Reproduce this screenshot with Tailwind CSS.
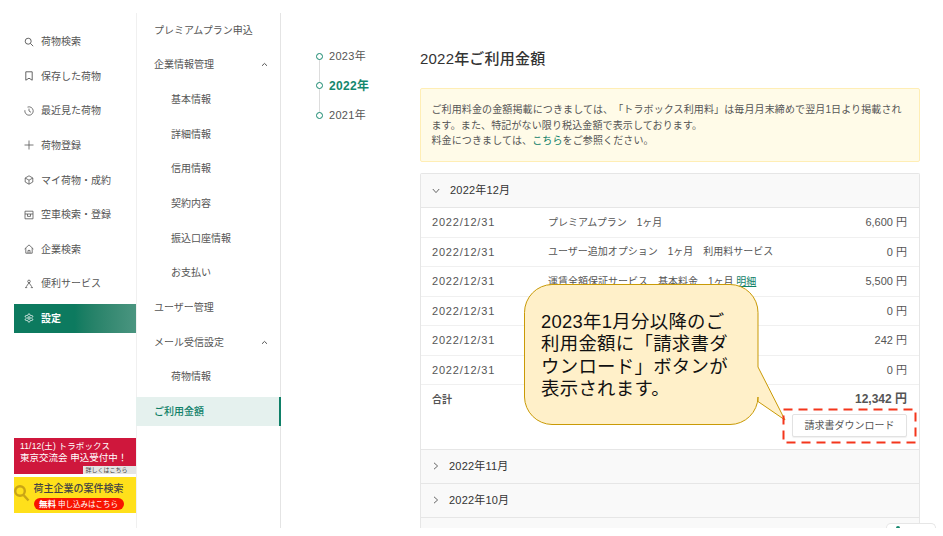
<!DOCTYPE html>
<html lang="ja">
<head>
<meta charset="utf-8">
<script src="https://cdn.jsdelivr.net/npm/@tailwindcss/browser@4"></script>
</head>
<body class="bg-white">
<div class="relative w-[943px] h-[536px] overflow-hidden bg-white text-[#555] text-[10px] [text-spacing-trim:space-all] font-['Liberation_Sans','Noto_Sans_CJK_JP',sans-serif]">
  <div class="flex h-[528px] overflow-hidden">
    <!-- Main nav -->
    <nav class="w-[136px] shrink-0 pl-[14px] pt-[27.3px] flex flex-col">
      <div class="flex flex-col gap-[5.8px]">
        <a class="h-[28.8px] flex items-center pl-[10px] gap-[7px]"><svg class="w-[10px] h-[10px]" viewBox="0 0 10 10" fill="none" stroke="#555" stroke-width="0.9"><circle cx="4.2" cy="4.2" r="3"/><path d="M6.4 6.4 9.2 9.2"/></svg><span>荷物検索</span></a>
        <a class="h-[28.8px] flex items-center pl-[10px] gap-[7px]"><svg class="w-[10px] h-[10px]" viewBox="0 0 10 10" fill="none" stroke="#555" stroke-width="0.9"><path d="M1.8.8h6.4v8.4L5 7.2 1.8 9.2z"/></svg><span>保存した荷物</span></a>
        <a class="h-[28.8px] flex items-center pl-[10px] gap-[7px]"><svg class="w-[10px] h-[10px]" viewBox="0 0 10 10" fill="none" stroke="#555" stroke-width="0.8"><path d="M3.5 1.1A4.2 4.2 0 1 1 .9 4.2M5 2.6V5l2 1.3"/></svg><span>最近見た荷物</span></a>
        <a class="h-[28.8px] flex items-center pl-[10px] gap-[7px]"><svg class="w-[10px] h-[10px]" viewBox="0 0 10 10" fill="none" stroke="#555" stroke-width="0.8"><path d="M5 .5v9M.5 5h9"/></svg><span>荷物登録</span></a>
        <a class="h-[28.8px] flex items-center pl-[10px] gap-[7px]"><svg class="w-[10px] h-[10px]" viewBox="0 0 10 10" fill="none" stroke="#555" stroke-width="0.8"><path d="M5 .8 8.8 3v4L5 9.2 1.2 7V3zM1.2 3 5 5.2 8.8 3M5 5.2v4"/></svg><span>マイ荷物・成約</span></a>
        <a class="h-[28.8px] flex items-center pl-[10px] gap-[7px]"><svg class="w-[10px] h-[10px]" viewBox="0 0 10 10" fill="none" stroke="#555" stroke-width="0.8"><path d="M1 1.2h8v7.6H1zM1 4h8M3.500 4v2.400h3V4"/></svg><span>空車検索・登録</span></a>
        <a class="h-[28.8px] flex items-center pl-[10px] gap-[7px]"><svg class="w-[10px] h-[10px]" viewBox="0 0 10 10" fill="none" stroke="#555" stroke-width="0.8"><path d="M.6 5 5 .9 9.400 5M1.800 4v5.200h6.400V4M4 9.200V6.400h2v2.800"/></svg><span>企業検索</span></a>
        <a class="h-[28.8px] flex items-center pl-[10px] gap-[7px]"><svg class="w-[10px] h-[10px]" viewBox="0 0 10 10" fill="none" stroke="#555" stroke-width="0.8"><circle cx="5" cy="2.400" r="1.300"/><path d="M5 3.700 2.200 7.800M5 3.700 7.800 7.800M1 8.600h2.200M6.800 8.600H9"/></svg><span>便利サービス</span></a>
        <a class="h-[28.8px] flex items-center pl-[10px] gap-[7px] font-bold text-white bg-gradient-to-r from-[#0d7a5f] from-50% to-[#4a9580]"><svg class="w-[10px] h-[10px]" viewBox="0 0 24 24" fill="none" stroke="#fff" stroke-width="2"><path d="M12.220 2h-.44a2 2 0 0 0-2 2v.18a2 2 0 0 1-1 1.730l-.43.25a2 2 0 0 1-2 0l-.15-.08a2 2 0 0 0-2.730.73l-.22.38a2 2 0 0 0 .73 2.730l.15.1a2 2 0 0 1 1 1.720v.51a2 2 0 0 1-1 1.740l-.15.09a2 2 0 0 0-.73 2.730l.22.38a2 2 0 0 0 2.730.73l.15-.08a2 2 0 0 1 2 0l.43.25a2 2 0 0 1 1 1.730V20a2 2 0 0 0 2 2h.44a2 2 0 0 0 2-2v-.18a2 2 0 0 1 1-1.730l.43-.25a2 2 0 0 1 2 0l.15.08a2 2 0 0 0 2.730-.73l.22-.39a2 2 0 0 0-.73-2.730l-.15-.08a2 2 0 0 1-1-1.740v-.5a2 2 0 0 1 1-1.740l.15-.09a2 2 0 0 0 .73-2.730l-.22-.38a2 2 0 0 0-2.730-.73l-.15.08a2 2 0 0 1-2 0l-.43-.25a2 2 0 0 1-1-1.730V4a2 2 0 0 0-2-2z"/><circle cx="12" cy="12" r="3"/></svg><span>設定</span></a>
      </div>
      <div class="mt-auto mb-[15.5px] flex flex-col gap-[3px] w-[121.5px]">
        <div class="relative h-[36px] bg-[#cf173c] text-white pl-[6px] pt-[3px] leading-[11px] overflow-hidden">
          <div class="text-[8.5px] tracking-[0.15px] whitespace-nowrap">11/12(土) トラボックス</div>
          <div class="text-[9.5px] whitespace-nowrap">東京交流会 申込受付中！</div>
          <div class="absolute right-0 bottom-0 w-[53px] h-[8px] bg-[#e4e4e4] text-[#444] text-[6px] leading-[8px] pl-[3px]">詳しくはこちら</div>
        </div>
        <div class="relative h-[36px] bg-[#ffe01b] overflow-hidden flex flex-col items-start pl-[19.5px] pt-[5.5px]">
          <svg class="absolute left-0 top-[7px] w-[16px] h-[18px]" viewBox="0 0 16 18" fill="none" stroke="#c9a516" stroke-width="2.4"><circle cx="6" cy="7" r="4.800"/><path d="M9.500 11 14.500 16.500"/></svg>
          <div class="text-[10px] leading-[13px] font-medium text-[#444] whitespace-nowrap">荷主企業の案件検索</div>
          <div class="mt-[2.5px] w-[90px] h-[12px] rounded-full bg-[#f81400] text-white text-[7.5px] leading-[12px] text-center whitespace-nowrap"><b class="text-[8.5px]">無料</b> 申し込みはこちら</div>
        </div>
      </div>
    </nav>

    <!-- Sub nav -->
    <nav class="w-[145px] shrink-0 mt-[13px] pt-[2.6px] border-x border-x-[#f0f0f0] border-r-[#e4e4e4] flex flex-col gap-[5.8px]">
      <a class="h-[28.9px] flex items-center pl-[17px]">プレミアムプラン申込</a>
      <a class="h-[28.9px] flex items-center justify-between pl-[17px] pr-[12px]">企業情報管理<svg class="w-[7px] h-[5px]" viewBox="0 0 7 5" fill="none" stroke="#555" stroke-width="1"><path d="M1 3.800 3.500 1.400 6 3.800"/></svg></a>
      <a class="h-[28.9px] flex items-center pl-[34px]">基本情報</a>
      <a class="h-[28.9px] flex items-center pl-[34px]">詳細情報</a>
      <a class="h-[28.9px] flex items-center pl-[34px]">信用情報</a>
      <a class="h-[28.9px] flex items-center pl-[34px]">契約内容</a>
      <a class="h-[28.9px] flex items-center pl-[34px]">振込口座情報</a>
      <a class="h-[28.9px] flex items-center pl-[34px]">お支払い</a>
      <a class="h-[28.9px] flex items-center pl-[17px]">ユーザー管理</a>
      <a class="h-[28.9px] flex items-center justify-between pl-[17px] pr-[12px]">メール受信設定<svg class="w-[7px] h-[5px]" viewBox="0 0 7 5" fill="none" stroke="#555" stroke-width="1"><path d="M1 3.800 3.500 1.400 6 3.800"/></svg></a>
      <a class="h-[28.9px] flex items-center pl-[17px]"><span class="pl-[17px]">荷物情報</span></a>
      <a class="h-[28.9px] -mx-px flex items-center pl-[18px] bg-[#e5f1ee] text-[#0f8068] font-medium border-r-2 border-r-[#0f8068]">ご利用金額</a>
    </nav>

    <!-- Year timeline -->
    <div class="w-[139px] shrink-0 pl-[35px] pt-[48.5px]">
      <div class="relative flex flex-col gap-[14px] text-[11px] tracking-[0.3px]">
        <div class="absolute left-[3px] top-[8px] bottom-[8px] w-px bg-[#ddd]"></div>
        <div class="relative h-[15.5px] flex items-center gap-[6px]"><span class="w-[7px] h-[7px] rounded-full border-[1.5px] border-[#14876d] bg-white"></span>2023年</div>
        <div class="relative h-[15.5px] flex items-center gap-[6px] font-bold text-[12px] text-[#14876d]"><span class="w-[7px] h-[7px] rounded-full border-[1.5px] border-[#14876d] bg-white"></span>2022年</div>
        <div class="relative h-[15.5px] flex items-center gap-[6px]"><span class="w-[7px] h-[7px] rounded-full border-[1.5px] border-[#14876d] bg-white"></span>2021年</div>
      </div>
    </div>

    <!-- Main -->
    <main class="w-[500px] shrink-0 pt-[48px]">
      <h1 class="text-[15px] leading-[22px] tracking-[0.2px] font-medium text-[#333]">2022年ご利用金額</h1>
      <div class="mt-[18px] h-[74px] rounded-[2px] border border-[#ffeeb5] bg-[#fffbe8] pl-[10.5px] pt-[13px] leading-[15.5px] tracking-[0.12px] whitespace-nowrap">
        <p>ご利用料金の金額掲載につきましては、「トラボックス利用料」は毎月月末締めで翌月1日より掲載され</p>
        <p>ます。また、特記がない限り税込金額で表示しております。</p>
        <p>料金につきましては、<span class="text-[#0f8068]">こちら</span>をご参照ください。</p>
      </div>
      <div class="mt-[11px] rounded-t-[2px] border-x border-t border-[#e6e6e6]">
        <div class="h-[34px] bg-[#f9f9f9] border-b border-[#e6e6e6] flex items-center pl-[11px] gap-[10px] text-[11px] tracking-[0.2px] text-[#333]"><svg class="w-[8px] h-[6px]" viewBox="0 0 8 6" fill="none" stroke="#555" stroke-width="0.9"><path d="M.8 1 4 4.600 7.200 1"/></svg>2022年12月</div>
        <div class="flex h-[29.5px] items-center border-b border-[#f0f0f0] pl-[11px] pr-[12px]"><span class="w-[116px] text-[11px] tracking-[0.8px]">2022/12/31</span><span class="flex-1">プレミアムプラン　1ヶ月</span><span class="text-[11px]">6,600 円</span></div>
        <div class="flex h-[29.5px] items-center border-b border-[#f0f0f0] pl-[11px] pr-[12px]"><span class="w-[116px] text-[11px] tracking-[0.8px]">2022/12/31</span><span class="flex-1">ユーザー追加オプション　1ヶ月　利用料サービス</span><span class="text-[11px]">0 円</span></div>
        <div class="flex h-[29.5px] items-center border-b border-[#f0f0f0] pl-[11px] pr-[12px]"><span class="w-[116px] text-[11px] tracking-[0.8px]">2022/12/31</span><span class="flex-1">運賃全額保証サービス　基本料金　1ヶ月 <span class="text-[#0f8068] underline">明細</span></span><span class="text-[11px]">5,500 円</span></div>
        <div class="flex h-[29.5px] items-center border-b border-[#f0f0f0] pl-[11px] pr-[12px]"><span class="w-[116px] text-[11px] tracking-[0.8px]">2022/12/31</span><span class="flex-1"></span><span class="text-[11px]">0 円</span></div>
        <div class="flex h-[29.5px] items-center border-b border-[#f0f0f0] pl-[11px] pr-[12px]"><span class="w-[116px] text-[11px] tracking-[0.8px]">2022/12/31</span><span class="flex-1"></span><span class="text-[11px]">242 円</span></div>
        <div class="flex h-[29.5px] items-center border-b border-[#f0f0f0] pl-[11px] pr-[12px]"><span class="w-[116px] text-[11px] tracking-[0.8px]">2022/12/31</span><span class="flex-1"></span><span class="text-[11px]">0 円</span></div>
        <div class="h-[64.6px] border-b border-[#e6e6e6] pl-[11px] pr-[12px] pt-[6.5px]">
          <div class="flex justify-between font-bold items-center h-[15px]"><span>合計</span><span class="text-[12px]">12,342 円</span></div>
          <div class="flex justify-end mt-[7.5px]"><button class="w-[115px] h-[23px] rounded-[2px] border border-[#e2e2e2] bg-white shadow-[0_1px_1px_rgba(0,0,0,0.06)] text-[10px] text-[#555]">請求書ダウンロード</button></div>
        </div>
        <div class="h-[34px] bg-[#f9f9f9] border-b border-[#e6e6e6] flex items-center pl-[12px] gap-[10px] text-[11px] tracking-[0.2px] text-[#333]"><svg class="w-[6px] h-[8px]" viewBox="0 0 6 8" fill="none" stroke="#555" stroke-width="0.9"><path d="M1 .8 4.600 4 1 7.200"/></svg>2022年11月</div>
        <div class="h-[34px] bg-[#f9f9f9] border-b border-[#e6e6e6] flex items-center pl-[12px] gap-[10px] text-[11px] tracking-[0.2px] text-[#333]"><svg class="w-[6px] h-[8px]" viewBox="0 0 6 8" fill="none" stroke="#555" stroke-width="0.9"><path d="M1 .8 4.600 4 1 7.200"/></svg>2022年10月</div>
        <div class="h-[34px] bg-[#f9f9f9]"></div>
      </div>
    </main>
  </div>

  <!-- Floating chat tab, cut off by the page edge -->
  <div class="absolute left-[886px] top-[523px] w-[50px] h-[5px] overflow-hidden rounded-t-[8px] border-x border-t border-[#e6e6e6] bg-white">
    <span class="absolute left-[9px] top-[2px] w-[4px] h-[4px] rounded-full bg-[#14876d]"></span>
  </div>

  <!-- Annotation: speech bubble -->
  <svg class="absolute left-0 top-0 pointer-events-none" width="943" height="536" viewBox="0 0 943 536" fill="none">
    <path d="M552 284.500H730A28 28 0 0 1 758 312.500V367L785 420L758 401.500V397A28 28 0 0 1 730 424.500H552A28 28 0 0 1 524.500 397V312.500A28 28 0 0 1 552 284.500Z" fill="#fff0c9" stroke="#c99a06" stroke-width="1"/>
    <rect x="783.500" y="409.500" width="132" height="33" stroke="#f4361c" stroke-width="2" stroke-dasharray="9 6"/>
  </svg>
  <div class="absolute left-[541px] top-[311px] w-[200px] text-[18.4px] leading-[22.3px] tracking-[0.3px] text-[#111]">2023年1月分以降のご<br>利用金額に「請求書ダ<br>ウンロード」ボタンが<br>表示されます。</div>
</div>
</body>
</html>
